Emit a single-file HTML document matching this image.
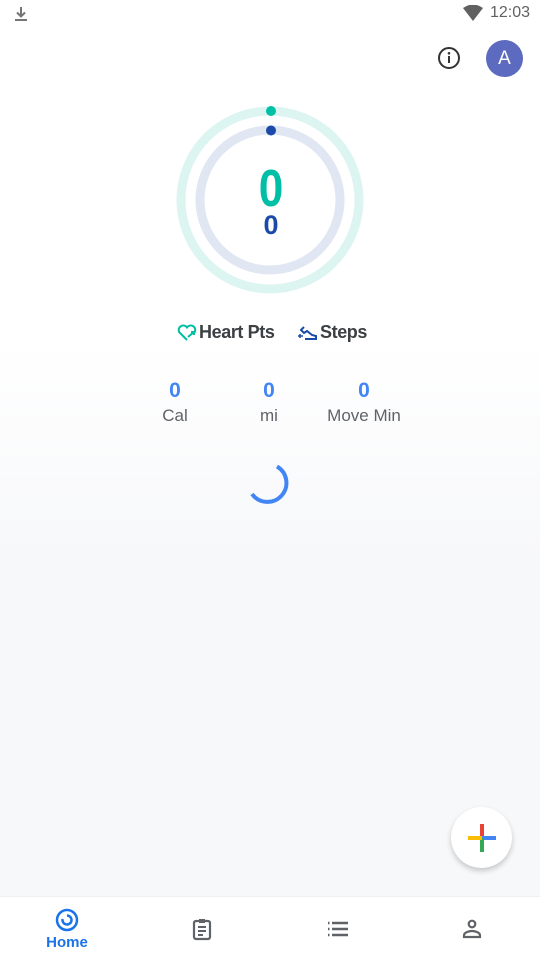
<!DOCTYPE html>
<html><head><meta charset="utf-8"><style>
body{margin:0;width:540px;height:960px;overflow:hidden;font-family:"Liberation Sans",sans-serif;background:linear-gradient(#fff 0,#fff 340px,#f7f8fa 560px,#f7f8fa 100%);position:relative}
.a{position:absolute}
.t{color:#5f6368;font-size:17px}
</style></head><body>
<svg class="a" style="left:12px;top:5px" width="18" height="18" viewBox="0 0 18 18"><path d="M9 2v9M5 7.5l4 4 4-4" stroke="#757575" stroke-width="2" fill="none"/><rect x="3" y="14" width="12" height="2" fill="#757575"/></svg>
<svg class="a" style="left:463px;top:5px" width="20" height="16" viewBox="0 0 20 16"><path d="M0 3Q10-4 20 3L10 16Z" fill="#616161"/></svg>
<div class="a" style="left:490px;top:4px;font-size:16px;color:#616161">12:03</div>
<svg class="a" style="left:437px;top:46px" width="24" height="24" viewBox="0 0 24 24"><circle cx="12" cy="12" r="10" fill="none" stroke="#333" stroke-width="2"/><rect x="11" y="10" width="2" height="7" fill="#333"/><circle cx="12" cy="7.3" r="1.3" fill="#333"/></svg>
<div class="a" style="left:486px;top:40px;width:37px;height:37px;border-radius:50%;background:#5c6bc0;color:#fff;font-size:19px;text-align:center;line-height:37px">A</div>
<svg class="a" style="left:170px;top:100px" width="200" height="200" viewBox="0 0 200 200">
<circle cx="100" cy="100" r="89" fill="none" stroke="#dcf5f1" stroke-width="9"/>
<circle cx="100" cy="100" r="70" fill="none" stroke="#e0e6f2" stroke-width="9"/>
<circle cx="101" cy="11" r="5" fill="#00bfa5"/>
<circle cx="101" cy="30.5" r="5" fill="#1a4ba8"/>
<text x="101" y="106" text-anchor="middle" font-family="Liberation Sans" font-size="52" font-weight="bold" fill="#00bfa5" transform="translate(101 0) scale(0.85 1) translate(-101 0)">0</text>
<text x="101" y="134" text-anchor="middle" font-family="Liberation Sans" font-size="27" font-weight="bold" fill="#1a4ba8">0</text>
</svg>
<svg class="a" style="left:177px;top:324px" width="20" height="18" viewBox="0 0 20 18"><path d="M10 16L2.5 8.5A4 4 0 0 1 10 3.5A4 4 0 0 1 17.5 8.5" fill="none" stroke="#00bfa5" stroke-width="2"/><path d="M11 13l6-5M14 8h3v3" stroke="#00bfa5" stroke-width="2" fill="none"/></svg>
<div class="a" style="left:199px;top:322px;font-size:18px;color:#3c4043;font-weight:bold;letter-spacing:-0.4px">Heart Pts</div>
<svg class="a" style="left:297px;top:324px" width="22" height="18" viewBox="0 0 22 18"><path d="M7 3l-3 3 3 3 3-2 5 4 4 1v3H8" fill="none" stroke="#1a4ba8" stroke-width="2"/><path d="M1 12h5M3 10v4" stroke="#1a4ba8" stroke-width="1.5"/></svg>
<div class="a" style="left:320px;top:322px;font-size:18px;color:#3c4043;font-weight:bold;letter-spacing:-0.4px">Steps</div>
<div class="a" style="left:148px;top:379px;width:54px;text-align:center;color:#4285f4;font-size:21px;font-weight:bold">0</div>
<div class="a t" style="left:148px;top:406px;width:54px;text-align:center">Cal</div>
<div class="a" style="left:242px;top:379px;width:54px;text-align:center;color:#4285f4;font-size:21px;font-weight:bold">0</div>
<div class="a t" style="left:242px;top:406px;width:54px;text-align:center">mi</div>
<div class="a" style="left:314px;top:379px;width:100px;text-align:center;color:#4285f4;font-size:21px;font-weight:bold">0</div>
<div class="a t" style="left:314px;top:406px;width:100px;text-align:center">Move Min</div>
<svg class="a" style="left:246px;top:460px" width="48" height="48" viewBox="0 0 48 48"><path d="M31 6.5A19 19 0 1 1 6 34" fill="none" stroke="#4285f4" stroke-width="4"/></svg>
<div class="a" style="left:451px;top:807px;width:61px;height:61px;border-radius:50%;background:#fff;box-shadow:0 3px 6px rgba(0,0,0,.2)"></div>
<svg class="a" style="left:467px;top:823px" width="30" height="30" viewBox="0 0 30 30"><rect x="13" y="1" width="4" height="14" fill="#ea4335"/><rect x="15" y="13" width="14" height="4" fill="#4285f4"/><rect x="13" y="15" width="4" height="14" fill="#34a853"/><rect x="1" y="13" width="14" height="4" fill="#fbbc04"/></svg>
<div class="a" style="left:0;top:896px;width:540px;height:64px;background:#fff;border-top:1px solid #eef0f2"></div>
<svg class="a" style="left:54px;top:907px" width="26" height="26" viewBox="0 0 26 26"><circle cx="13" cy="13" r="10" fill="none" stroke="#1a73e8" stroke-width="2.5"/><path d="M13 8.5A4.5 4.5 0 1 1 8.6 12" fill="none" stroke="#1a73e8" stroke-width="2.5"/></svg>
<div class="a" style="left:36px;top:934px;width:62px;text-align:center;color:#1a73e8;font-size:15px;font-weight:bold">Home</div>
<svg class="a" style="left:190px;top:917px" width="24" height="24" viewBox="0 0 24 24"><rect x="4" y="4" width="16" height="18" rx="2" fill="none" stroke="#5f6368" stroke-width="2.2"/><rect x="9" y="2" width="6" height="4" fill="#5f6368"/><path d="M8 10h8M8 14h8M8 18h5" stroke="#5f6368" stroke-width="2"/></svg>
<svg class="a" style="left:326px;top:918px" width="24" height="22" viewBox="0 0 24 22"><path d="M2 5h1.5M2 11h1.5M2 17h1.5M6 5h16M6 11h16M6 17h16" stroke="#5f6368" stroke-width="2.4"/></svg>
<svg class="a" style="left:460px;top:917px" width="24" height="24" viewBox="0 0 24 24"><circle cx="12" cy="7" r="3.3" fill="none" stroke="#5f6368" stroke-width="2.2"/><path d="M4 20v-1.5C4 15 10 14 12 14s8 1 8 4.5V20Z" fill="none" stroke="#5f6368" stroke-width="2.2"/></svg>
</body></html>
